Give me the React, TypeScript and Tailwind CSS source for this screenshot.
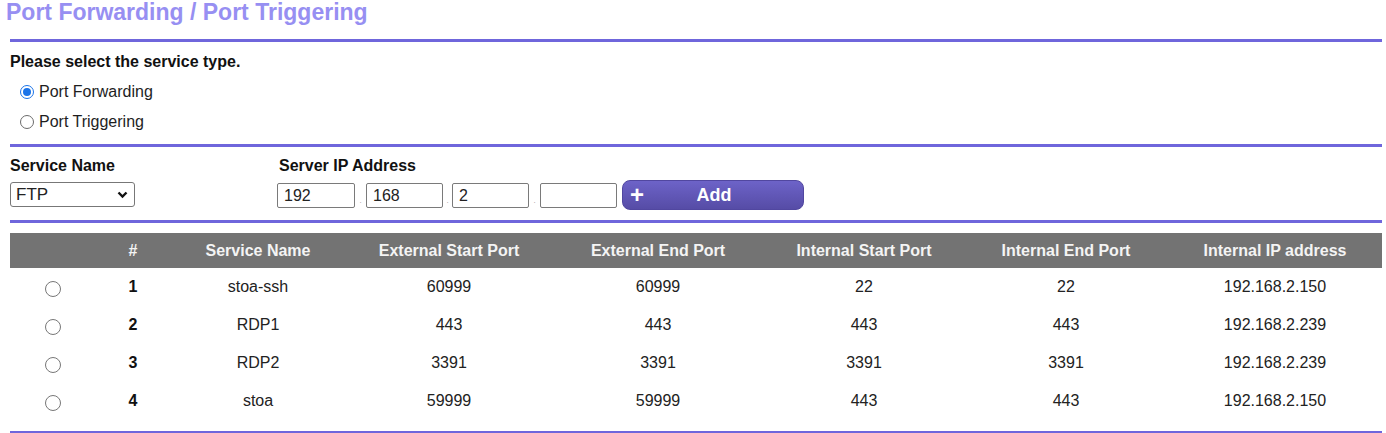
import React from "react";

const rows = [
  ["1", "stoa-ssh", "60999", "60999", "22", "22", "192.168.2.150"],
  ["2", "RDP1", "443", "443", "443", "443", "192.168.2.239"],
  ["3", "RDP2", "3391", "3391", "3391", "3391", "192.168.2.239"],
  ["4", "stoa", "59999", "59999", "443", "443", "192.168.2.150"],
];

const headers = [
  "",
  "#",
  "Service Name",
  "External Start Port",
  "External End Port",
  "Internal Start Port",
  "Internal End Port",
  "Internal IP address",
];

const cols = "grid grid-cols-[86px_74px_176px_206px_212px_200px_204px_214px]";

function Line() {
  return <div className="h-[3px] bg-[#6f66dc] ml-[10px] mr-[4px]" />;
}

function Radio({ checked }: { checked?: boolean }) {
  return checked ? (
    <span className="inline-flex w-[14px] h-[14px] rounded-full border-[1.5px] border-[#1a73e8] items-center justify-center">
      <span className="w-[8px] h-[8px] rounded-full bg-[#1a73e8]" />
    </span>
  ) : (
    <span className="inline-block w-[14px] h-[14px] rounded-full border border-[#6b6b6b] bg-white" />
  );
}

function IpBox({ v, w }: { v: string; w: string }) {
  return (
    <div className={`${w} mt-[3px] h-[25px] border border-[#7a7a7a] rounded-[2px] pl-[6px] flex items-center text-[16px] text-[#222]`}>
      {v}
    </div>
  );
}

function Dot({ w }: { w: string }) {
  return <div className={`${w} mt-[3px] h-[25px] flex items-end justify-center pb-[3px] text-[8px] text-[#999] leading-none`}>.</div>;
}

export default function App() {
  return (
    <div className="w-[1386px] h-[433px] bg-white overflow-hidden text-[16px] text-[#1e1e1e]" style={{ fontFamily: '"Liberation Sans", Arial, sans-serif' }}>
      <div className="h-[39px] pl-[6px] text-[23px] leading-[24px] font-bold text-[#978ff2]">
        Port Forwarding / Port Triggering
      </div>
      <Line />
      <div className="pl-[10px]">
        <div className="h-[38px] flex items-center pt-[2px] font-bold text-[#111]">Please select the service type.</div>
        <div className="h-[30px] flex items-center pl-[10px] gap-[5px] -mt-[3px]">
          <Radio checked />
          <span>Port Forwarding</span>
        </div>
        <div className="h-[30px] flex items-center pl-[10px] gap-[5px]">
          <Radio />
          <span>Port Triggering</span>
        </div>
      </div>
      <div className="h-[7px]" />
      <Line />
      <div className="pl-[10px] flex h-[73px]">
        <div className="w-[267px] flex flex-col">
          <div className="h-[35px] pt-[7px] font-bold text-[#111]">Service Name</div>
          <div className="w-[125px] h-[25px] border border-[#777] rounded-[3px] flex items-center justify-between pl-[5px] pr-[6px] text-[17px] text-[#222]">
            <span>FTP</span>
            <svg width="11" height="8" viewBox="0 0 11 8">
              <path d="M1.5 1.5 L5.5 5.5 L9.5 1.5" fill="none" stroke="#111" strokeWidth="2.4" />
            </svg>
          </div>
        </div>
        <div className="flex flex-col">
          <div className="h-[34px] pt-[7px] pl-[2px] font-bold text-[#111]">Server IP Address</div>
          <div className="flex items-start -mt-[1px] h-[31px]">
            <IpBox v="192" w="w-[78px]" />
            <Dot w="w-[11px]" />
            <IpBox v="168" w="w-[77px]" />
            <Dot w="w-[9px]" />
            <IpBox v="2" w="w-[77px]" />
            <Dot w="w-[11px]" />
            <IpBox v="" w="w-[77px]" />
            <button className="ml-[5px] w-[182px] h-[30px] rounded-[8px] bg-gradient-to-b from-[#6d63c8] to-[#564ca6] border border-[#5147a0] flex items-center text-white font-bold text-[18px] relative">
              <span className="absolute left-[7px] top-[2px] text-[24px] leading-[24px]">+</span>
              <span className="w-full text-center pl-[2px]">Add</span>
            </button>
          </div>
        </div>
      </div>
      <Line />
      <div className="h-[10px]" />
      <div className="ml-[10px] mr-[4px]">
        <div className={`${cols} h-[35px] bg-[#737373] text-[#f4f4f4] font-bold items-center text-center`}>
          {headers.map((h, i) => (
            <div key={i}>{h}</div>
          ))}
        </div>
        {rows.map((r, i) => (
          <div key={i} className={`${cols} h-[38px] items-center text-center text-[#222]`}>
            <div className="flex justify-center pt-[3px]">
              <span className="inline-block w-[16px] h-[16px] rounded-full border border-[#777] bg-white" />
            </div>
            {r.map((c, j) => (
              <div key={j} className={j === 0 ? "font-bold text-[#111]" : ""}>
                {c}
              </div>
            ))}
          </div>
        ))}
      </div>
      <div className="h-[11px]" />
      <Line />
    </div>
  );
}
